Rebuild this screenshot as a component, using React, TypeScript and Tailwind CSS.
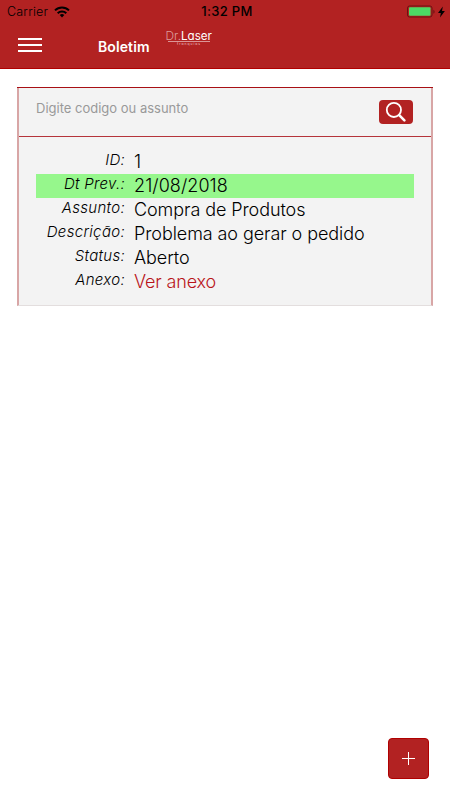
import type { ReactNode } from "react";

interface TicketField {
  label: string;
  value: ReactNode;
  highlight?: boolean;
}

const fields: TicketField[] = [
  { label: "ID:", value: "1" },
  { label: "Dt Prev.:", value: <span className="tracking-[0.08px]">21/08/2018</span>, highlight: true },
  { label: "Assunto:", value: "Compra de Produtos" },
  { label: "Descrição:", value: "Problema ao gerar o pedido" },
  { label: "Status:", value: "Aberto" },
  { label: "Anexo:", value: <a className="tracking-[-0.16px] text-[#b9151b]">Ver anexo</a> },
];

function StatusBar() {
  return (
    <div className="grid h-[23px] grid-cols-3 items-center text-black">
      <div className="flex items-center gap-[6px] pl-[7px]">
        <span className="text-[12.5px] leading-[23px] font-light tracking-[0.2px]">Carrier</span>
        <svg width="16" height="12" viewBox="0 0 16 12" fill="none" stroke="currentColor" strokeWidth="2">
          <path d="M1 4.4a10 10 0 0 1 14 0" />
          <path d="M3.7 7.2a6.1 6.1 0 0 1 8.6 0" />
          <path d="M8 11.4 5.7 9a3.4 3.4 0 0 1 4.6 0Z" fill="currentColor" stroke="none" />
        </svg>
      </div>
      <div className="pl-1 text-center text-[13px] font-medium leading-[23px] tracking-[0.3px]">1:32 PM</div>
      <div className="flex items-center justify-end pr-[5px]">
        <svg width="29" height="13" viewBox="0 0 29 13">
          <rect x="0.5" y="1" width="24.5" height="11" rx="2" fill="none" stroke="#6b1212" />
          <rect x="2" y="2.2" width="21.5" height="8.6" rx="1" fill="#4cd964" />
          <path d="M26.4 4.7c1.6.6 1.6 3.4 0 4Z" fill="#6b1212" />
        </svg>
        <svg className="ml-[2px]" width="7" height="12" viewBox="0 0 7 12">
          <path d="M4.8.4 0 6.9h2.8L2 11.6 6.9 4.9H4Z" fill="#000" />
        </svg>
      </div>
    </div>
  );
}

function Logo() {
  return (
    <svg width="48" height="18" viewBox="0 0 48 18" className="-mt-[16px] ml-[15px] [font-feature-settings:'cv11']">
      <text x="0.5" y="10.8" textLength="15.5" lengthAdjust="spacingAndGlyphs" fontSize="11.5" fontWeight="300" fill="#dd9c9c">Dr.</text>
      <text x="16" y="10.8" textLength="31" lengthAdjust="spacingAndGlyphs" fontSize="11.5" fontWeight="400" fill="#fff">Laser</text>
      <path d="M3 12.5h42" stroke="#e6b4b4" strokeWidth="0.8" />
      <text x="12" y="16.2" textLength="23" fontSize="3.4" fill="#efc8c8">franquias</text>
    </svg>
  );
}

function Header() {
  return (
    <header className="h-[69px] border-b border-[#b00000] bg-[#b22222]">
      <StatusBar />
      <div className="flex h-[45px] items-center">
        <button className="-mt-[2px] ml-[18px] flex w-6 flex-col gap-1">
          <span className="h-[2px] bg-white" />
          <span className="h-[2px] bg-white" />
          <span className="h-[2px] bg-white" />
        </button>
        <h1 className="mt-[2px] ml-[56px] text-[14px] font-semibold tracking-[0.1px] text-white">Boletim</h1>
        <Logo />
      </div>
    </header>
  );
}

function SearchBar() {
  return (
    <div className="flex h-[49px] items-center justify-between border-b border-b-[#b5343a] px-[17px]">
      <span className="-mt-[7px] text-[13px] text-[#999]">Digite codigo ou assunto</span>
      <button className="mr-px flex h-6 w-[34px] items-center justify-center rounded-[4px] bg-[#b22222]">
        <svg width="22" height="22" viewBox="0 0 22 22" fill="none" stroke="#fff">
          <circle cx="8.9" cy="8.9" r="7.1" strokeWidth="1.8" />
          <path d="m14.2 14.2 5.2 5.2" strokeWidth="2.6" strokeLinecap="round" />
        </svg>
      </button>
    </div>
  );
}

function FieldRow({ label, value, highlight }: TicketField) {
  return (
    <div className={highlight ? "flex h-6 bg-[#96f78c]" : "flex h-6"}>
      <div className="w-[89px] text-right text-[15px] font-light italic leading-[20px] tracking-[0.3px]">{label}</div>
      <div className="ml-[9px] text-[18px] font-light leading-[24px] tracking-[-0.08px] whitespace-nowrap">{value}</div>
    </div>
  );
}

export default function App() {
  return (
    <div className="flex h-[800px] w-[450px] flex-col overflow-hidden bg-white font-['Inter',sans-serif] text-black">
      <Header />
      <main className="flex-1 px-[17px] pt-[18px]">
        <div className="h-px bg-[#a81015]" />
        <section className="h-[218px] border-x-2 border-b border-x-[#d8a6a6] border-b-[#e3dede] bg-[#f3f3f3]">
          <SearchBar />
          <div className="px-[17px] pt-[13px]">
            {fields.map((field) => (
              <FieldRow key={field.label} {...field} />
            ))}
          </div>
        </section>
      </main>
      <footer className="flex justify-end pr-[21px] pb-[21px]">
        <button className="flex size-[41px] items-center justify-center rounded-[4px] border border-[#b00000] bg-[#b22222]">
          <svg width="14" height="14" viewBox="0 0 14 14" stroke="#fff">
            <path d="M0 6.5h13M6.5 0v13" />
          </svg>
        </button>
      </footer>
    </div>
  );
}
